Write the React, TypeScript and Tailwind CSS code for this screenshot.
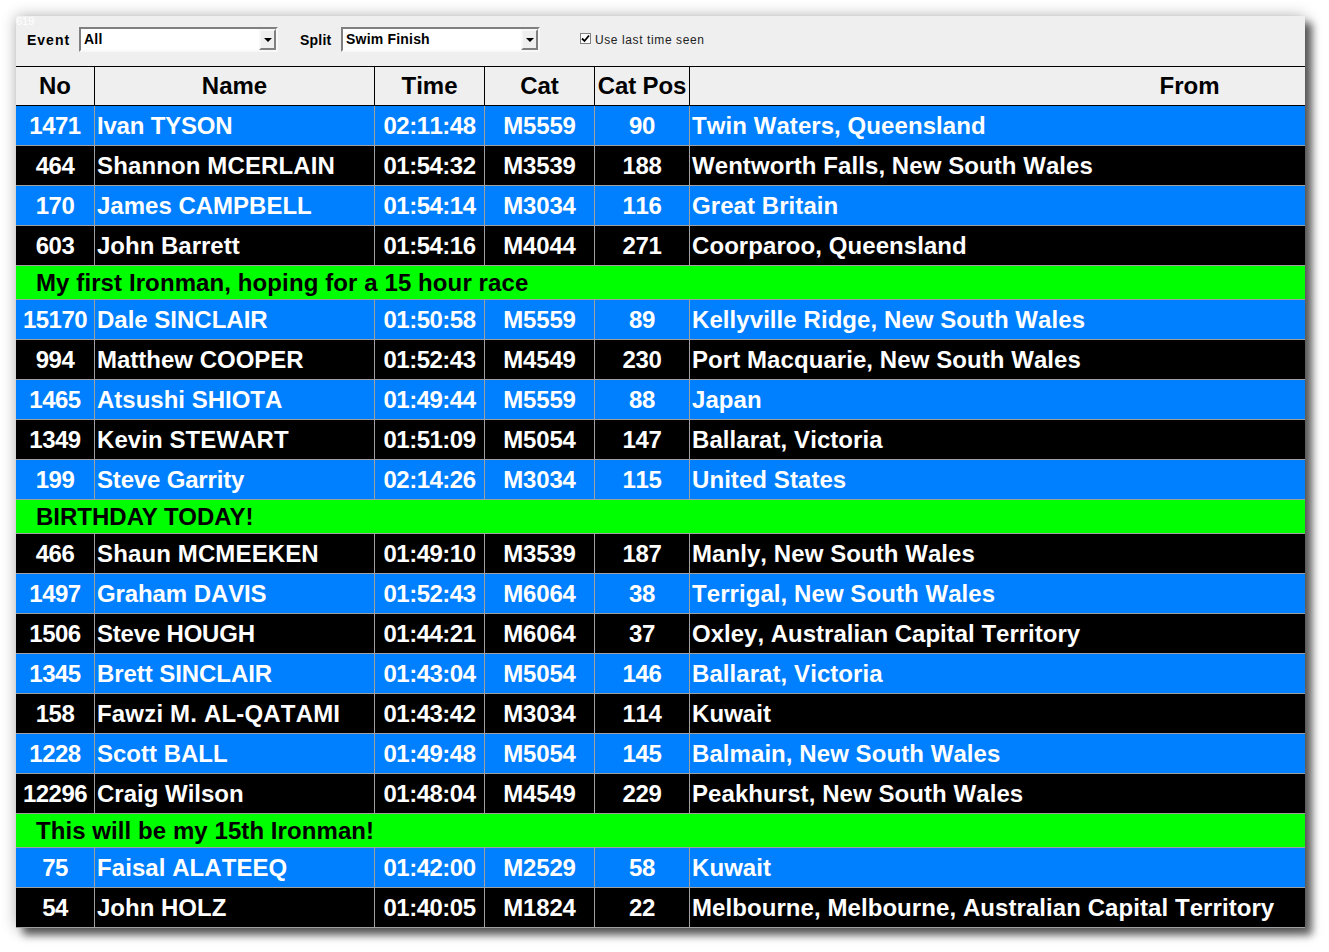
const F = "[font-family:'Liberation_Sans',Arial,sans-serif]";
type R = { g: string; k?: string } | { n: string; a: string; t: string; c: string; p: string; f: string; k?: string; m?: string };
const rows: R[] = [
  { n: "1471", a: "Ivan TYSON", t: "02:11:48", c: "M5559", p: "90", f: "Twin Waters, Queensland", k: "tracking-[-0.2px]" },
  { n: "464", a: "Shannon MCERLAIN", t: "01:54:32", c: "M3539", p: "188", f: "Wentworth Falls, New South Wales", k: "tracking-[0.13px]" },
  { n: "170", a: "James CAMPBELL", t: "01:54:14", c: "M3034", p: "116", f: "Great Britain" },
  { n: "603", a: "John Barrett", t: "01:54:16", c: "M4044", p: "271", f: "Coorparoo, Queensland" },
  { g: "My first Ironman, hoping for a 15 hour race", k: "tracking-[0.1px]" },
  { n: "15170", a: "Dale SINCLAIR", t: "01:50:58", c: "M5559", p: "89", f: "Kellyville Ridge, New South Wales" },
  { n: "994", a: "Matthew COOPER", t: "01:52:43", c: "M4549", p: "230", f: "Port Macquarie, New South Wales" },
  { n: "1465", a: "Atsushi SHIOTA", t: "01:49:44", c: "M5559", p: "88", f: "Japan" },
  { n: "1349", a: "Kevin STEWART", t: "01:51:09", c: "M5054", p: "147", f: "Ballarat, Victoria", k: "tracking-[0.08px]" },
  { n: "199", a: "Steve Garrity", t: "02:14:26", c: "M3034", p: "115", f: "United States", k: "tracking-[-0.17px]" },
  { g: "BIRTHDAY TODAY!", k: "[font-kerning:normal]" },
  { n: "466", a: "Shaun MCMEEKEN", t: "01:49:10", c: "M3539", p: "187", f: "Manly, New South Wales", k: "tracking-[0.13px]" },
  { n: "1497", a: "Graham DAVIS", t: "01:52:43", c: "M6064", p: "38", f: "Terrigal, New South Wales", k: "tracking-[-0.1px]" },
  { n: "1506", a: "Steve HOUGH", t: "01:44:21", c: "M6064", p: "37", f: "Oxley, Australian Capital Territory", k: "tracking-[-0.2px]", m: "tracking-[0px]" },
  { n: "1345", a: "Brett SINCLAIR", t: "01:43:04", c: "M5054", p: "146", f: "Ballarat, Victoria", k: "tracking-[-0.07px]" },
  { n: "158", a: "Fawzi M. AL-QATAMI", t: "01:43:42", c: "M3034", p: "114", f: "Kuwait", k: "tracking-[0.18px]" },
  { n: "1228", a: "Scott BALL", t: "01:49:48", c: "M5054", p: "145", f: "Balmain, New South Wales" },
  { n: "12296", a: "Craig Wilson", t: "01:48:04", c: "M4549", p: "229", f: "Peakhurst, New South Wales" },
  { g: "This will be my 15th Ironman!", k: "tracking-[0.07px]" },
  { n: "75", a: "Faisal ALATEEQ", t: "01:42:00", c: "M2529", p: "58", f: "Kuwait", k: "tracking-[0.07px]" },
  { n: "54", a: "John HOLZ", t: "01:40:05", c: "M1824", p: "22", f: "Melbourne, Melbourne, Australian Capital Territory" },
];

function Select({ value, w }: { value: string; w: string }) {
  return (
    <div className={`${w} h-[25px] flex bg-white border-2 border-t-[#808080] border-l-[#808080] border-r-[#f8f8f8] border-b-[#f8f8f8]`}>
      <span className="flex-1 pl-[3px] pt-[2px] text-[14px] leading-[17px] font-bold tracking-[0.2px] text-black">{value}</span>
      <span className="w-[17px] h-[21px] bg-[#efefef] border-2 border-t-[#f8f8f8] border-l-[#f8f8f8] border-r-[#808080] border-b-[#808080] flex items-center justify-center">
        <span className="w-0 h-0 border-x-[4px] border-x-transparent border-t-[4px] border-t-black" />
      </span>
    </div>
  );
}

export default function App() {
  let blue = true;
  return (
    <div className={`${F} [font-kerning:none] w-[1329px] h-[952px] bg-white pt-[16px] pl-[16px]`}>
      <div className="relative w-[1289px] shadow-[0_0_14px_rgba(0,0,0,0.3),7px_7px_8px_rgba(0,0,0,0.6)]">
        <span className="absolute left-0 top-0 text-[11px] leading-[11px] text-white">619</span>
        <div className="h-[50px] bg-[#efefef] flex items-start pt-[11px] pl-[11px] text-black">
          <span className="w-[52px] pt-[1px] text-[14px] leading-[25px] font-bold tracking-[1px]">Event</span>
          <Select value="All" w="w-[199px]" />
          <span className="ml-[22px] w-[41px] pt-[1px] text-[14px] leading-[25px] font-bold tracking-[0.2px]">Split</span>
          <Select value="Swim Finish" w="w-[199px]" />
          <span className="ml-[40px] mt-[6px] w-[11px] h-[11px] bg-white border border-[#808080] flex items-center justify-center">
            <svg width="9" height="9" viewBox="0 0 9 9"><path d="M1 4.5 L3.5 7 L8 1.5" fill="none" stroke="#000" strokeWidth="1.8" /></svg>
          </span>
          <span className="ml-[4px] pt-[1px] text-[12px] leading-[25px] tracking-[0.6px] text-[#222]">Use last time seen</span>
        </div>
        <div className="flex h-[40px] bg-[#efefef] border-y border-black text-[24px] leading-[38px] font-bold text-black text-center">
          <div className="w-[79px] border-r border-black">No</div>
          <div className="w-[280px] border-r border-black">Name</div>
          <div className="w-[110px] border-r border-black">Time</div>
          <div className="w-[110px] border-r border-black">Cat</div>
          <div className="w-[95px] border-r border-black whitespace-nowrap tracking-[-0.1px]">Cat Pos</div>
          <div className="flex-1 pl-[384px]">From</div>
        </div>
        {rows.map((r, i) => {
          if ("g" in r) {
            return (
              <div key={i} className={`h-[34px] bg-[#00ff00] border-b border-[#a0a0a0] pl-[20px] text-[24px] leading-[33px] font-bold text-black ${r.k ?? ""}`}>
                {r.g}
              </div>
            );
          }
          const bg = blue ? "bg-[#007fff]" : "bg-black";
          blue = !blue;
          return (
            <div key={i} className={`flex h-[40px] ${bg} border-b border-[#a0a0a0] text-[24px] leading-[39px] font-bold text-white`}>
              <div className="w-[79px] border-r border-[#a0a0a0] text-center whitespace-nowrap tracking-[-0.5px]">{r.n}</div>
              <div className={`w-[280px] border-r border-[#a0a0a0] pl-[2px] whitespace-nowrap ${r.k ?? ""}`}>{r.a}</div>
              <div className="w-[110px] border-r border-[#a0a0a0] text-center tracking-[-0.5px]">{r.t}</div>
              <div className="w-[110px] border-r border-[#a0a0a0] text-center tracking-[-0.2px]">{r.c}</div>
              <div className="w-[95px] border-r border-[#a0a0a0] text-center tracking-[-0.4px]">{r.p}</div>
              <div className={`flex-1 pl-[2px] whitespace-nowrap ${r.m ?? "tracking-[0.07px]"}`}>{r.f}</div>
            </div>
          );
        })}
      </div>
    </div>
  );
}
